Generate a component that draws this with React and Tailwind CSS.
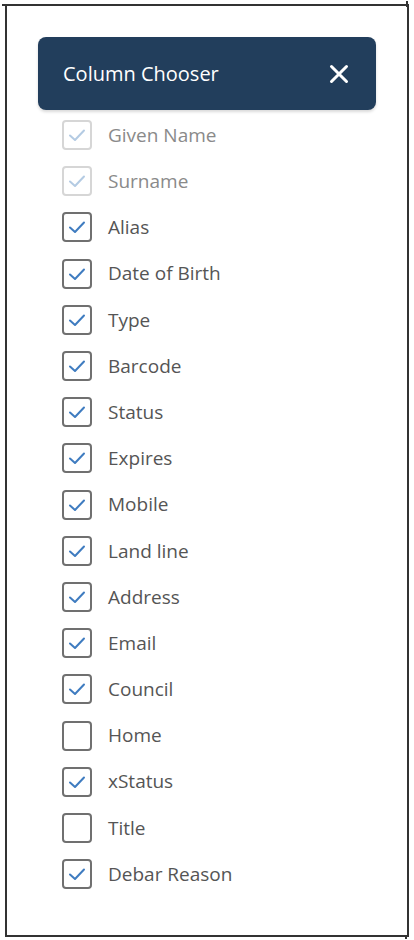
import React from "react";

const columns = [
  { name: "Given Name", checked: true, disabled: true },
  { name: "Surname", checked: true, disabled: true },
  { name: "Alias", checked: true },
  { name: "Date of Birth", checked: true },
  { name: "Type", checked: true },
  { name: "Barcode", checked: true },
  { name: "Status", checked: true },
  { name: "Expires", checked: true },
  { name: "Mobile", checked: true },
  { name: "Land line", checked: true },
  { name: "Address", checked: true },
  { name: "Email", checked: true },
  { name: "Council", checked: true },
  { name: "Home", checked: false },
  { name: "xStatus", checked: true },
  { name: "Title", checked: false },
  { name: "Debar Reason", checked: true },
];

const CheckBox = ({ checked, disabled }) => (
  <div
    className={`w-[30px] h-[30px] rounded-[4px] border-2 flex items-center justify-center shrink-0 ${
      disabled ? "border-[#d6d6d6]" : "border-[#707070]"
    }`}
  >
    {checked && (
      <svg width="20" height="20" viewBox="0 0 20 20" fill="none">
        <path
          d="M3 10.5 L8 15 L17 5.5"
          stroke={disabled ? "#b4cbe3" : "#3f7cc0"}
          strokeWidth="2"
          strokeLinecap="round"
          strokeLinejoin="round"
        />
      </svg>
    )}
  </div>
);

export default function App() {
  return (
    <div
      className="w-[414px] h-[940px] bg-white pt-[4px] pl-[5px] relative"
      style={{ fontFamily: '"Open Sans", "Noto Sans", sans-serif' }}
    >
      <div className="w-[404px] h-[933px] border-[2.5px] border-[#333333] pl-[31px] pr-[31px] pt-[31px]">
        <div className="bg-[#223e5c] rounded-[8px] h-[73px] flex items-center justify-between pl-[25px] pr-[27px] shadow-[0_2px_3px_rgba(0,0,0,0.15)]">
          <span className="text-white text-[20px]">Column Chooser</span>
          <svg width="20" height="20" viewBox="0 0 20 20">
            <path d="M2.5 2.5 L17.5 17.5 M17.5 2.5 L2.5 17.5" stroke="white" strokeWidth="3" strokeLinecap="round" />
          </svg>
        </div>
        <div className="pl-[24px] pt-[2px] flex flex-col">
          {columns.map((c) => (
            <div key={c.name} className="h-[46.2px] flex items-center gap-[16px]">
              <CheckBox checked={c.checked} disabled={c.disabled} />
              <span className={`text-[19px] ${c.disabled ? "text-[#8a8a8a]" : "text-[#555555]"}`}>{c.name}</span>
            </div>
          ))}
        </div>
      </div>
      {/* corner overshoots of the sketch frame */}
      <div className="absolute left-[2px] top-[4px] w-[6px] h-[2px] bg-[#333333]" />
      <div className="absolute left-[406px] top-[1px] w-[2px] h-[6px] bg-[#333333]" />
      <div className="absolute left-[405px] top-[935px] w-[2px] h-[4px] bg-[#333333]" />
    </div>
  );
}
